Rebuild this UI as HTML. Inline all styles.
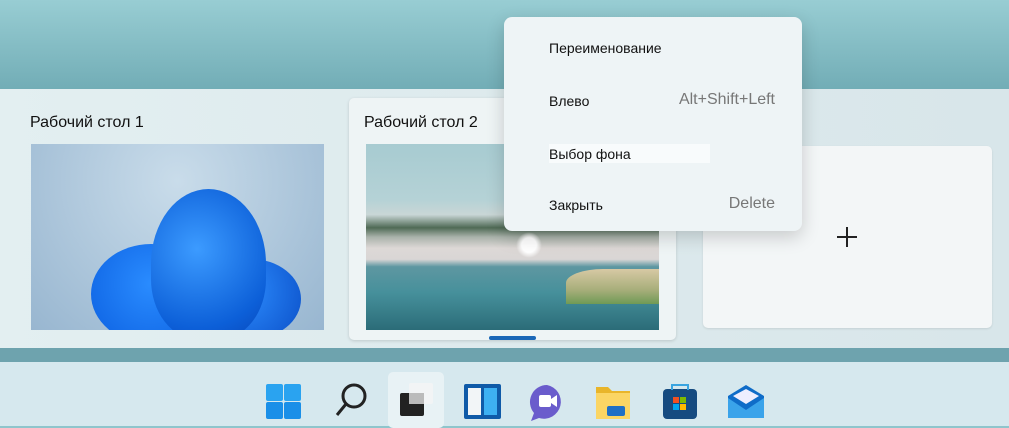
<!DOCTYPE html><html><head><meta charset="utf-8"><style>
*{margin:0;padding:0;box-sizing:border-box}
body{width:1009px;height:426px;overflow:hidden;position:relative;font-family:"Liberation Sans","Noto Sans CJK SC",sans-serif;background:#8fc5cc;}
.abs{position:absolute}
#top{left:0;top:0;width:1009px;height:89px;background:linear-gradient(180deg,#98cdd3,#72adb6)}
#panel{left:0;top:89px;width:1009px;height:259px;background:linear-gradient(90deg,#e3eff1,#dce9ec 60%,#d8e6ea)}
#strip{left:0;top:348px;width:1009px;height:14px;background:#6ea3ae}
#task{left:0;top:362px;width:1009px;height:64px;background:#d6e8ee}
.lbl{font-size:16px;color:#111}
.menu{left:504px;top:17px;width:298px;height:214px;background:#eef4f6;border-radius:8px;box-shadow:0 6px 18px rgba(0,0,0,.18);}
.mi{position:absolute;left:45px;font-size:14px;color:#111}
.sc{position:absolute;right:27px;font-size:16px;color:#777}
</style></head><body>
<div id="top" class="abs"></div>
<div id="panel" class="abs"></div>
<div id="strip" class="abs"></div>
<div id="task" class="abs"></div>
<div class="abs lbl" style="left:30px;top:114px">Рабочий стол 1</div>
<div class="abs" style="left:31px;top:144px;width:293px;height:186px;background:radial-gradient(ellipse at 50% 20%,#c9dcea,#98b6d0);overflow:hidden">
<div class="abs" style="left:60px;top:100px;width:120px;height:100px;border-radius:50%;background:radial-gradient(circle at 50% 40%,#2a8cff,#0b5fe0)"></div>
<div class="abs" style="left:170px;top:115px;width:100px;height:80px;border-radius:50%;background:radial-gradient(circle at 40% 40%,#2e8eff,#0a4fc8)"></div>
<div class="abs" style="left:120px;top:45px;width:115px;height:150px;border-radius:50% 50% 40% 40%;background:radial-gradient(circle at 40% 40%,#3c9bff,#0c5fd8 70%,#0846b8)"></div>
</div>
<div class="abs" style="left:349px;top:98px;width:327px;height:242px;background:#eef4f5;border-radius:5px;box-shadow:0 1px 3px rgba(0,0,0,.15)"></div>
<div class="abs lbl" style="left:364px;top:114px">Рабочий стол 2</div>
<div class="abs" style="left:366px;top:144px;width:293px;height:186px;overflow:hidden;background:linear-gradient(180deg,#a7cbd1 0%,#b5d2d6 30%,#c9d6d6 38%,#4f6a55 45%,#a9b2aa 50%,#ddd8d6 56%,#d9d6d5 62%,#5e97a1 66%,#46909b 80%,#2b6c78 100%)">
<div class="abs" style="left:150px;top:88px;width:26px;height:26px;border-radius:50%;background:radial-gradient(#fff 40%,rgba(255,255,255,0) 70%)"></div>
<div class="abs" style="left:200px;top:125px;width:93px;height:35px;border-radius:40% 0 0 0;background:linear-gradient(180deg,#d7c9a4,#a7ae7a 60%,#6f9a55)"></div>
</div>
<div class="abs" style="left:489px;top:336px;width:47px;height:4px;border-radius:2px;background:#1a67b7"></div>
<div class="abs lbl" style="left:790px;top:109px">о</div>
<div class="abs" style="left:703px;top:146px;width:289px;height:182px;background:#f3f6f7;border-radius:5px;box-shadow:0 1px 2px rgba(0,0,0,.1)"></div>
<div class="abs" style="left:837px;top:236px;width:20px;height:1.5px;background:#222"></div>
<div class="abs" style="left:846px;top:227px;width:1.5px;height:20px;background:#222"></div>
<div class="abs menu">
<div class="mi" style="top:23px">Переименование</div>
<div class="mi" style="top:76px">Влево</div><div class="sc" style="top:74px">Alt+Shift+Left</div>
<div class="abs" style="left:45px;top:127px;width:161px;height:19px;background:#f8fbfc"></div>
<div class="mi" style="top:129px">Выбор фона</div>
<div class="mi" style="top:180px">Закрыть</div><div class="sc" style="top:178px">Delete</div>
</div>
<div class="abs" style="left:388px;top:372px;width:56px;height:56px;border-radius:5px;background:#e8f2f5"></div>
<svg class="abs" style="left:0;top:362px" width="1009" height="64">
<g fill="#1a8fe8"><rect x="266" y="22" width="17" height="17" rx="2" fill="#2aa3f0"/><rect x="284" y="22" width="17" height="17" rx="2" fill="#2aa3f0"/><rect x="266" y="40" width="17" height="17" rx="2"/><rect x="284" y="40" width="17" height="17" rx="2"/></g>
<circle cx="354" cy="34" r="11" fill="none" stroke="#222" stroke-width="3"/><line x1="346" y1="42" x2="337" y2="53" stroke="#222" stroke-width="3"/>
<rect x="409" y="21" width="24" height="21" rx="2" fill="#f2f4f5"/><rect x="400" y="31" width="24" height="23" rx="2" fill="#222"/><rect x="409" y="31" width="15" height="11" fill="#bbb"/>
<rect x="464" y="22" width="37" height="35" rx="2" fill="#0f5aa8"/><rect x="468" y="26" width="13" height="27" fill="#f2f5f7"/><rect x="484" y="26" width="13" height="27" fill="#3db0f2"/>
<path d="M547 23a17 17 0 1 1-8 33l-8 3 3-8a17 17 0 0 1 13-28z" fill="#6a5ccc"/><rect x="539" y="33" width="12" height="12" rx="2" fill="#fff"/><path d="M551 37l6-4v12l-6-4z" fill="#fff"/>
<path d="M596 25h12l4 4h18v28h-34z" fill="#e9b52a"/><rect x="596" y="31" width="34" height="26" fill="#fbd564"/><rect x="607" y="44" width="18" height="10" rx="2" fill="#1f6fc5"/>
<rect x="663" y="27" width="34" height="30" rx="4" fill="#164b80"/><path d="M672 28v-5h16v5" fill="none" stroke="#3aa4e0" stroke-width="2"/><rect x="673" y="35" width="6" height="6" fill="#f25022"/><rect x="680" y="35" width="6" height="6" fill="#7fba00"/><rect x="673" y="42" width="6" height="6" fill="#00a4ef"/><rect x="680" y="42" width="6" height="6" fill="#ffb900"/>
<path d="M728 34l18-11 18 11v22h-36z" fill="#0f6cc8"/><path d="M733 34l13-7 13 7-13 8z" fill="#eef"/><path d="M728 36l18 12 18-12v20h-36z" fill="#3aa3ea"/>
</svg>
</body></html>
